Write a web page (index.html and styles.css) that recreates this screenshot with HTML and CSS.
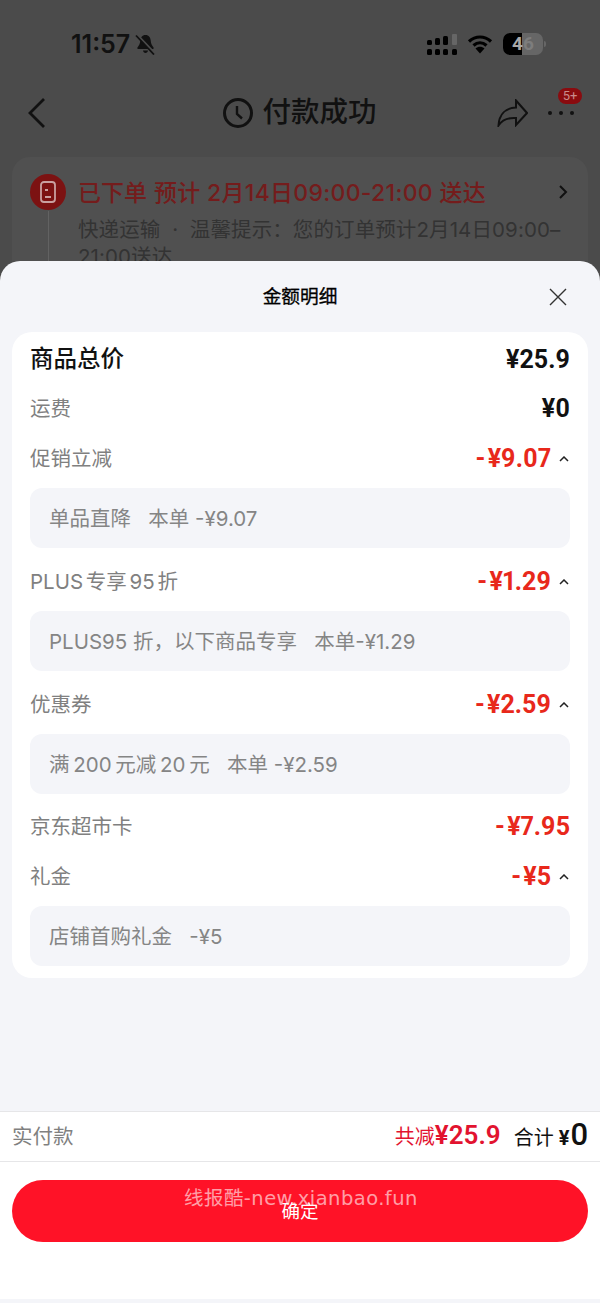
FILE: index.html
```html
<!DOCTYPE html>
<html lang="zh-CN">
<head>
    <meta charset="UTF-8">
    <meta name="viewport" content="width=device-width, initial-scale=1.0">
    <title>金额明细</title>
    <link rel="stylesheet" href="styles.css">
</head>
<body>

<div class="page">
    <div class="behind">
        <div class="status-bar">
            <div class="status-left">
                <span class="time">11:57</span>
                <svg class="bell" width="21" height="22" viewBox="0 0 21 22">
                    <path d="M10.5 2c3.4 0 5 2.6 5.2 5.6.2 3 1 4.800 2.800 6.900.5.700.2 1.500-.7 1.500H3.200c-.9 0-1.200-.8-.7-1.500C4.300 12.400 5.100 10.600 5.300 7.600 5.500 4.600 7.100 2 10.500 2z"/>
                    <path d="M8 17.500h5c-.2 1.500-1.200 2.500-2.500 2.500S8.200 19 8 17.500z"/>
                    <path class="bell-slash-gap" d="M2 1.500l18 19"/>
                    <path class="bell-slash" d="M1 2.500l18 19"/>
                </svg>
            </div>
            <div class="status-right">
                <svg width="30" height="21" viewBox="0 0 30 21">
                    <rect x="0" y="6" width="5" height="5" rx="1.500" fill="#000"/>
                    <rect x="8" y="4" width="5" height="7" rx="1.500" fill="#000"/>
                    <rect x="16" y="2" width="5" height="9" rx="1.500" fill="#000"/>
                    <rect x="25" y="0" width="5" height="11" rx="1" fill="#666"/>
                    <rect x="0" y="15" width="5" height="6" rx="1.500" fill="#000"/>
                    <rect x="8" y="15" width="5" height="6" rx="1.500" fill="#000"/>
                    <rect x="16" y="15" width="5" height="6" rx="1.500" fill="#000"/>
                    <rect x="25" y="15" width="5" height="6" rx="1.500" fill="#000"/>
                </svg>
                <svg width="26" height="20" viewBox="0 0 26 20">
                    <path class="wifi" d="M2 7.500c6.500-6 15.500-6 22 0"/>
                    <path class="wifi" d="M6.500 11.500c4-3.600 9-3.600 13 0"/>
                    <path d="M13 19.500l-4.500-5c2.600-2.200 6.400-2.200 9 0z" fill="#000"/>
                </svg>
                <div class="battery">
                    <span class="battery-fill"></span>
                    <span class="battery-level"><span class="digit-on">4</span>6</span>
                </div>
                <span class="battery-nub"></span>
            </div>
        </div>

        <div class="nav-bar">
            <svg class="back" width="18" height="32" viewBox="0 0 18 32">
                <path d="M16 2L2 16l14 14"/>
            </svg>
            <div class="nav-title">
                <svg width="30" height="30" viewBox="0 0 30 30">
                    <circle cx="15" cy="15" r="13.500"/>
                    <path d="M14 8v8l5 4.500"/>
                </svg>
                <span>付款成功</span>
            </div>
            <div class="nav-actions">
                <svg class="share" width="31" height="28" viewBox="0 0 31 28">
                    <path d="M19 1.500L30 14 19 26v-7C11 18.500 5 21 1.500 26.500 2 15 9 9 19 8.500z"/>
                </svg>
                <div class="more">
                    <i></i><i></i><i></i>
                    <span class="badge">5+</span>
                </div>
            </div>
        </div>

        <div class="order-card">
            <div class="order-icon">
                <svg width="20" height="24" viewBox="0 0 20 24">
                    <rect x="3" y="2" width="14" height="20" rx="3"/>
                    <path d="M7 10h3M7 17h6"/>
                </svg>
            </div>
            <div class="order-line"></div>
            <div class="order-text">
                <div class="order-title"><span>已下单</span><span class="order-eta">预计 2月14日09:00-21:00 送达</span></div>
                <div class="order-sub">快递运输 &nbsp;·&nbsp; 温馨提示：您的订单预计2月14日09:00–<br>21:00送达</div>
            </div>
            <svg class="order-arrow" width="10" height="16" viewBox="0 0 10 16">
                <path d="M2 2l6 6-6 6"/>
            </svg>
        </div>
    </div>

    <div class="sheet">
        <div class="sheet-head">
            <span class="sheet-title">金额明细</span>
            <svg class="close" width="18" height="18" viewBox="0 0 18 18">
                <path d="M1 1l16 16M17 1L1 17"/>
            </svg>
        </div>

        <div class="detail-card">
            <div class="row row-main">
                <span class="row-label">商品总价</span>
                <span class="row-value">¥25.9</span>
            </div>
            <div class="row">
                <span class="row-label">运费</span>
                <span class="row-value">¥0</span>
            </div>

            <div class="row row-open">
                <span class="row-label">促销立减</span>
                <span class="row-value is-red">- ¥9.07</span>
                <svg class="caret" width="10" height="6" viewBox="0 0 10 6"><path d="M1 5l4-4 4 4"/></svg>
            </div>
            <div class="row-note">单品直降&nbsp;&nbsp;&nbsp;本单 -¥9.07</div>

            <div class="row row-open">
                <span class="row-label">PLUS 专享 95 折</span>
                <span class="row-value is-red">- ¥1.29</span>
                <svg class="caret" width="10" height="6" viewBox="0 0 10 6"><path d="M1 5l4-4 4 4"/></svg>
            </div>
            <div class="row-note">PLUS95 折，以下商品专享&nbsp;&nbsp;&nbsp;本单-¥1.29</div>

            <div class="row row-open">
                <span class="row-label">优惠券</span>
                <span class="row-value is-red">- ¥2.59</span>
                <svg class="caret" width="10" height="6" viewBox="0 0 10 6"><path d="M1 5l4-4 4 4"/></svg>
            </div>
            <div class="row-note">满&thinsp;200&thinsp;元减&thinsp;20&thinsp;元&nbsp;&nbsp;&nbsp;本单 -¥2.59</div>

            <div class="row">
                <span class="row-label">京东超市卡</span>
                <span class="row-value is-red">- ¥7.95</span>
            </div>

            <div class="row row-open">
                <span class="row-label">礼金</span>
                <span class="row-value is-red">- ¥5</span>
                <svg class="caret" width="10" height="6" viewBox="0 0 10 6"><path d="M1 5l4-4 4 4"/></svg>
            </div>
            <div class="row-note">店铺首购礼金&nbsp;&nbsp;&nbsp;-¥5</div>
        </div>

        <div class="sheet-footer">
            <div class="summary">
                <span class="summary-label">实付款</span>
                <div class="summary-right">
                    <span class="saved">共减<b>¥25.9</b></span>
                    <span class="total">合计 <small>¥</small><b>0</b></span>
                </div>
            </div>
            <div class="actions">
                <button class="confirm">确定</button>
            </div>
        </div>
    </div>

    <div class="watermark">线报酷-new.xianbao.fun</div>
</div>

</body>
</html>
```

FILE: styles.css
```css
* {
    margin: 0;
    padding: 0;
    box-sizing: border-box;
}

body {
    background: #4b4b4b;
    font-family: Roboto, 'Noto Sans CJK SC', sans-serif;
    color: #000;
}

.page {
    position: relative;
    display: flex;
    flex-direction: column;
    width: 600px;
    height: 1303px;
    overflow: hidden;
}

/* dimmed order page behind the sheet */
.behind {
    height: 261px;
    flex-shrink: 0;
    overflow: hidden;
}

.status-bar {
    display: flex;
    justify-content: space-between;
    align-items: center;
    height: 88px;
    padding: 0 57px 0 71px;
}

.status-left {
    display: flex;
    align-items: center;
    gap: 5px;
}

.time {
    font-family: Inter, sans-serif;
    font-size: 25px;
    font-weight: 600;
    color: #111;
}

.bell path {
    fill: #111;
}

.bell .bell-slash {
    fill: none;
    stroke: #111;
    stroke-width: 1.8;
}

.bell .bell-slash-gap {
    fill: none;
    stroke: #4b4b4b;
    stroke-width: 2;
}

.status-right {
    position: relative;
    display: flex;
    align-items: center;
    gap: 10px;
}

.wifi {
    fill: none;
    stroke: #000;
    stroke-width: 3.2;
}

.battery {
    position: relative;
    width: 40px;
    height: 22px;
    border-radius: 7px;
    background: #666;
    overflow: hidden;
}

.battery-fill {
    position: absolute;
    left: 0;
    top: 0;
    bottom: 0;
    width: 19px;
    background: #000;
}

.battery-level {
    position: absolute;
    left: 0;
    right: 0;
    top: 0;
    text-align: center;
    font-size: 19px;
    line-height: 22px;
    font-weight: 700;
    color: #7d7d7d;
}

.digit-on {
    color: #a8a8a8;
}

.battery-nub {
    position: absolute;
    right: -3px;
    top: 8px;
    width: 2px;
    height: 6px;
    border-radius: 0 2px 2px 0;
    background: #666;
}

.nav-bar {
    display: grid;
    grid-template-columns: 1fr auto 1fr;
    align-items: center;
    height: 50px;
    padding: 0 26px;
}

.back {
    margin-left: 2px;
}

.back path {
    fill: none;
    stroke: #111;
    stroke-width: 2.8;
}

.nav-title {
    display: flex;
    align-items: center;
    gap: 9px;
    font-size: 28.500px;
    line-height: 36px;
    font-weight: 500;
    color: #111;
}

.nav-title svg {
    fill: none;
    stroke: #111;
    stroke-width: 3;
}

.nav-title svg path {
    stroke-width: 2.4;
}

.nav-actions {
    display: flex;
    justify-content: flex-end;
    align-items: center;
    gap: 20px;
}

.share path {
    fill: none;
    stroke: #111;
    stroke-width: 2;
    stroke-linejoin: miter;
}

.more {
    position: relative;
    display: flex;
    gap: 7px;
}

.more i {
    width: 4px;
    height: 4px;
    border-radius: 50%;
    background: #111;
}

.badge {
    position: absolute;
    left: 10px;
    top: -23px;
    width: 24px;
    height: 16px;
    border-radius: 8px;
    background: #8a0b0f;
    color: #c98a8a;
    font-size: 13px;
    line-height: 16px;
    text-align: center;
}

.order-card {
    position: relative;
    display: flex;
    gap: 13px;
    height: 150px;
    margin: 19px 12px 0;
    padding: 17px 0 0 18px;
    background: #505050;
    border-radius: 18px;
}

.order-icon {
    display: flex;
    align-items: center;
    justify-content: center;
    flex-shrink: 0;
    width: 36px;
    height: 36px;
    border-radius: 50%;
    background: #7c1212;
}

.order-icon svg {
    fill: none;
    stroke: #c9a0a0;
    stroke-width: 1.8;
}

.order-line {
    position: absolute;
    left: 36px;
    top: 54px;
    width: 1px;
    height: 60px;
    background: #626262;
}

.order-text {
    margin-left: -1px;
    padding-top: 1px;
    font-family: Inter, 'Noto Sans CJK SC', sans-serif;
}

.order-title {
    display: flex;
    gap: 7px;
    font-size: 23px;
    line-height: 36px;
    font-weight: 500;
    color: #741c1c;
    white-space: nowrap;
}

.order-eta {
    letter-spacing: 0.3px;
}

.order-sub {
    margin-top: 5px;
    font-size: 20.500px;
    line-height: 27px;
    letter-spacing: 0.1px;
    color: #333;
    white-space: nowrap;
}

.order-arrow {
    position: absolute;
    right: 20px;
    top: 27px;
    fill: none;
    stroke: #111;
    stroke-width: 2;
}

/* bottom sheet */
.sheet {
    position: relative;
    flex: 1;
    display: flex;
    flex-direction: column;
    padding-bottom: 4px;
    background: #f4f5f9;
    border-radius: 20px 20px 0 0;
}

.sheet-head {
    position: relative;
    flex-shrink: 0;
    height: 71px;
    display: flex;
    justify-content: center;
    align-items: center;
}

.sheet-title {
    margin-bottom: 4px;
    font-size: 18.700px;
    font-weight: 400;
    -webkit-text-stroke: 0.3px #000;
}

.close {
    position: absolute;
    right: 33px;
    top: 27px;
    stroke: #333;
    stroke-width: 1.4;
}

.detail-card {
    margin: 0 12px;
    padding: 3px 18px 12px;
    background: #fff;
    border-radius: 20px;
}

.row {
    display: flex;
    align-items: center;
    height: 49px;
}

.row-open {
    height: 50px;
}

.row-label {
    flex: 1;
    margin-bottom: 3px;
    font-family: Inter, 'Noto Sans CJK SC', sans-serif;
    font-size: 20.500px;
    word-spacing: -3px;
    color: #808080;
}

.row-value {
    font-size: 25px;
    font-weight: 700;
    font-variant-numeric: proportional-nums;
    word-spacing: -4px;
    color: #111;
}

.row-main .row-label {
    margin-bottom: 5px;
    font-size: 23.500px;
    font-weight: 500;
    color: #111;
}

.is-red {
    color: #e8281b;
}

.caret {
    margin: 2px 1px 0 8px;
    fill: none;
    stroke: #222;
    stroke-width: 1.500;
}

.row-note {
    height: 60px;
    margin: 5px 0 8px;
    padding: 0 19px 2px;
    display: flex;
    align-items: center;
    background: #f4f5f9;
    border-radius: 12px;
    font-family: Inter, 'Noto Sans CJK SC', sans-serif;
    font-size: 20.500px;
    white-space: pre;
    color: #858585;
}

.row-note:last-child {
    margin-bottom: 0;
}

.sheet-footer {
    margin-top: auto;
    background: #fff;
}

.summary {
    display: flex;
    justify-content: space-between;
    align-items: center;
    height: 51px;
    padding: 0 12px 3px;
    border-top: 1px solid #e6e6e8;
    border-bottom: 1px solid #e6e6e8;
}

.summary-label {
    font-size: 20.500px;
    color: #808080;
}

.summary-right {
    display: flex;
    align-items: center;
    gap: 13px;
}

.saved {
    font-size: 20px;
    color: #e2132f;
}

.saved b {
    font-size: 26px;
    font-weight: 600;
}

.total {
    font-size: 20px;
    color: #111;
}

.total small {
    font-size: 20px;
    font-weight: 700;
}

.total b {
    margin-left: 1px;
    font-size: 31px;
    line-height: 30px;
    font-weight: 500;
}

.actions {
    height: 137px;
    padding: 18px 12px 0;
}

.confirm {
    display: block;
    width: 100%;
    height: 62px;
    padding-bottom: 2px;
    border: none;
    border-radius: 31px;
    background: #ff1227;
    color: #fff;
    font-family: inherit;
    font-size: 18.500px;
}

.watermark {
    position: absolute;
    left: 184px;
    top: 1187px;
    font-family: 'DejaVu Sans', 'Noto Sans CJK SC', sans-serif;
    font-size: 19.500px;
    line-height: 24px;
    letter-spacing: 0.45px;
    white-space: nowrap;
    color: rgba(255, 255, 255, 0.6);
}
```
